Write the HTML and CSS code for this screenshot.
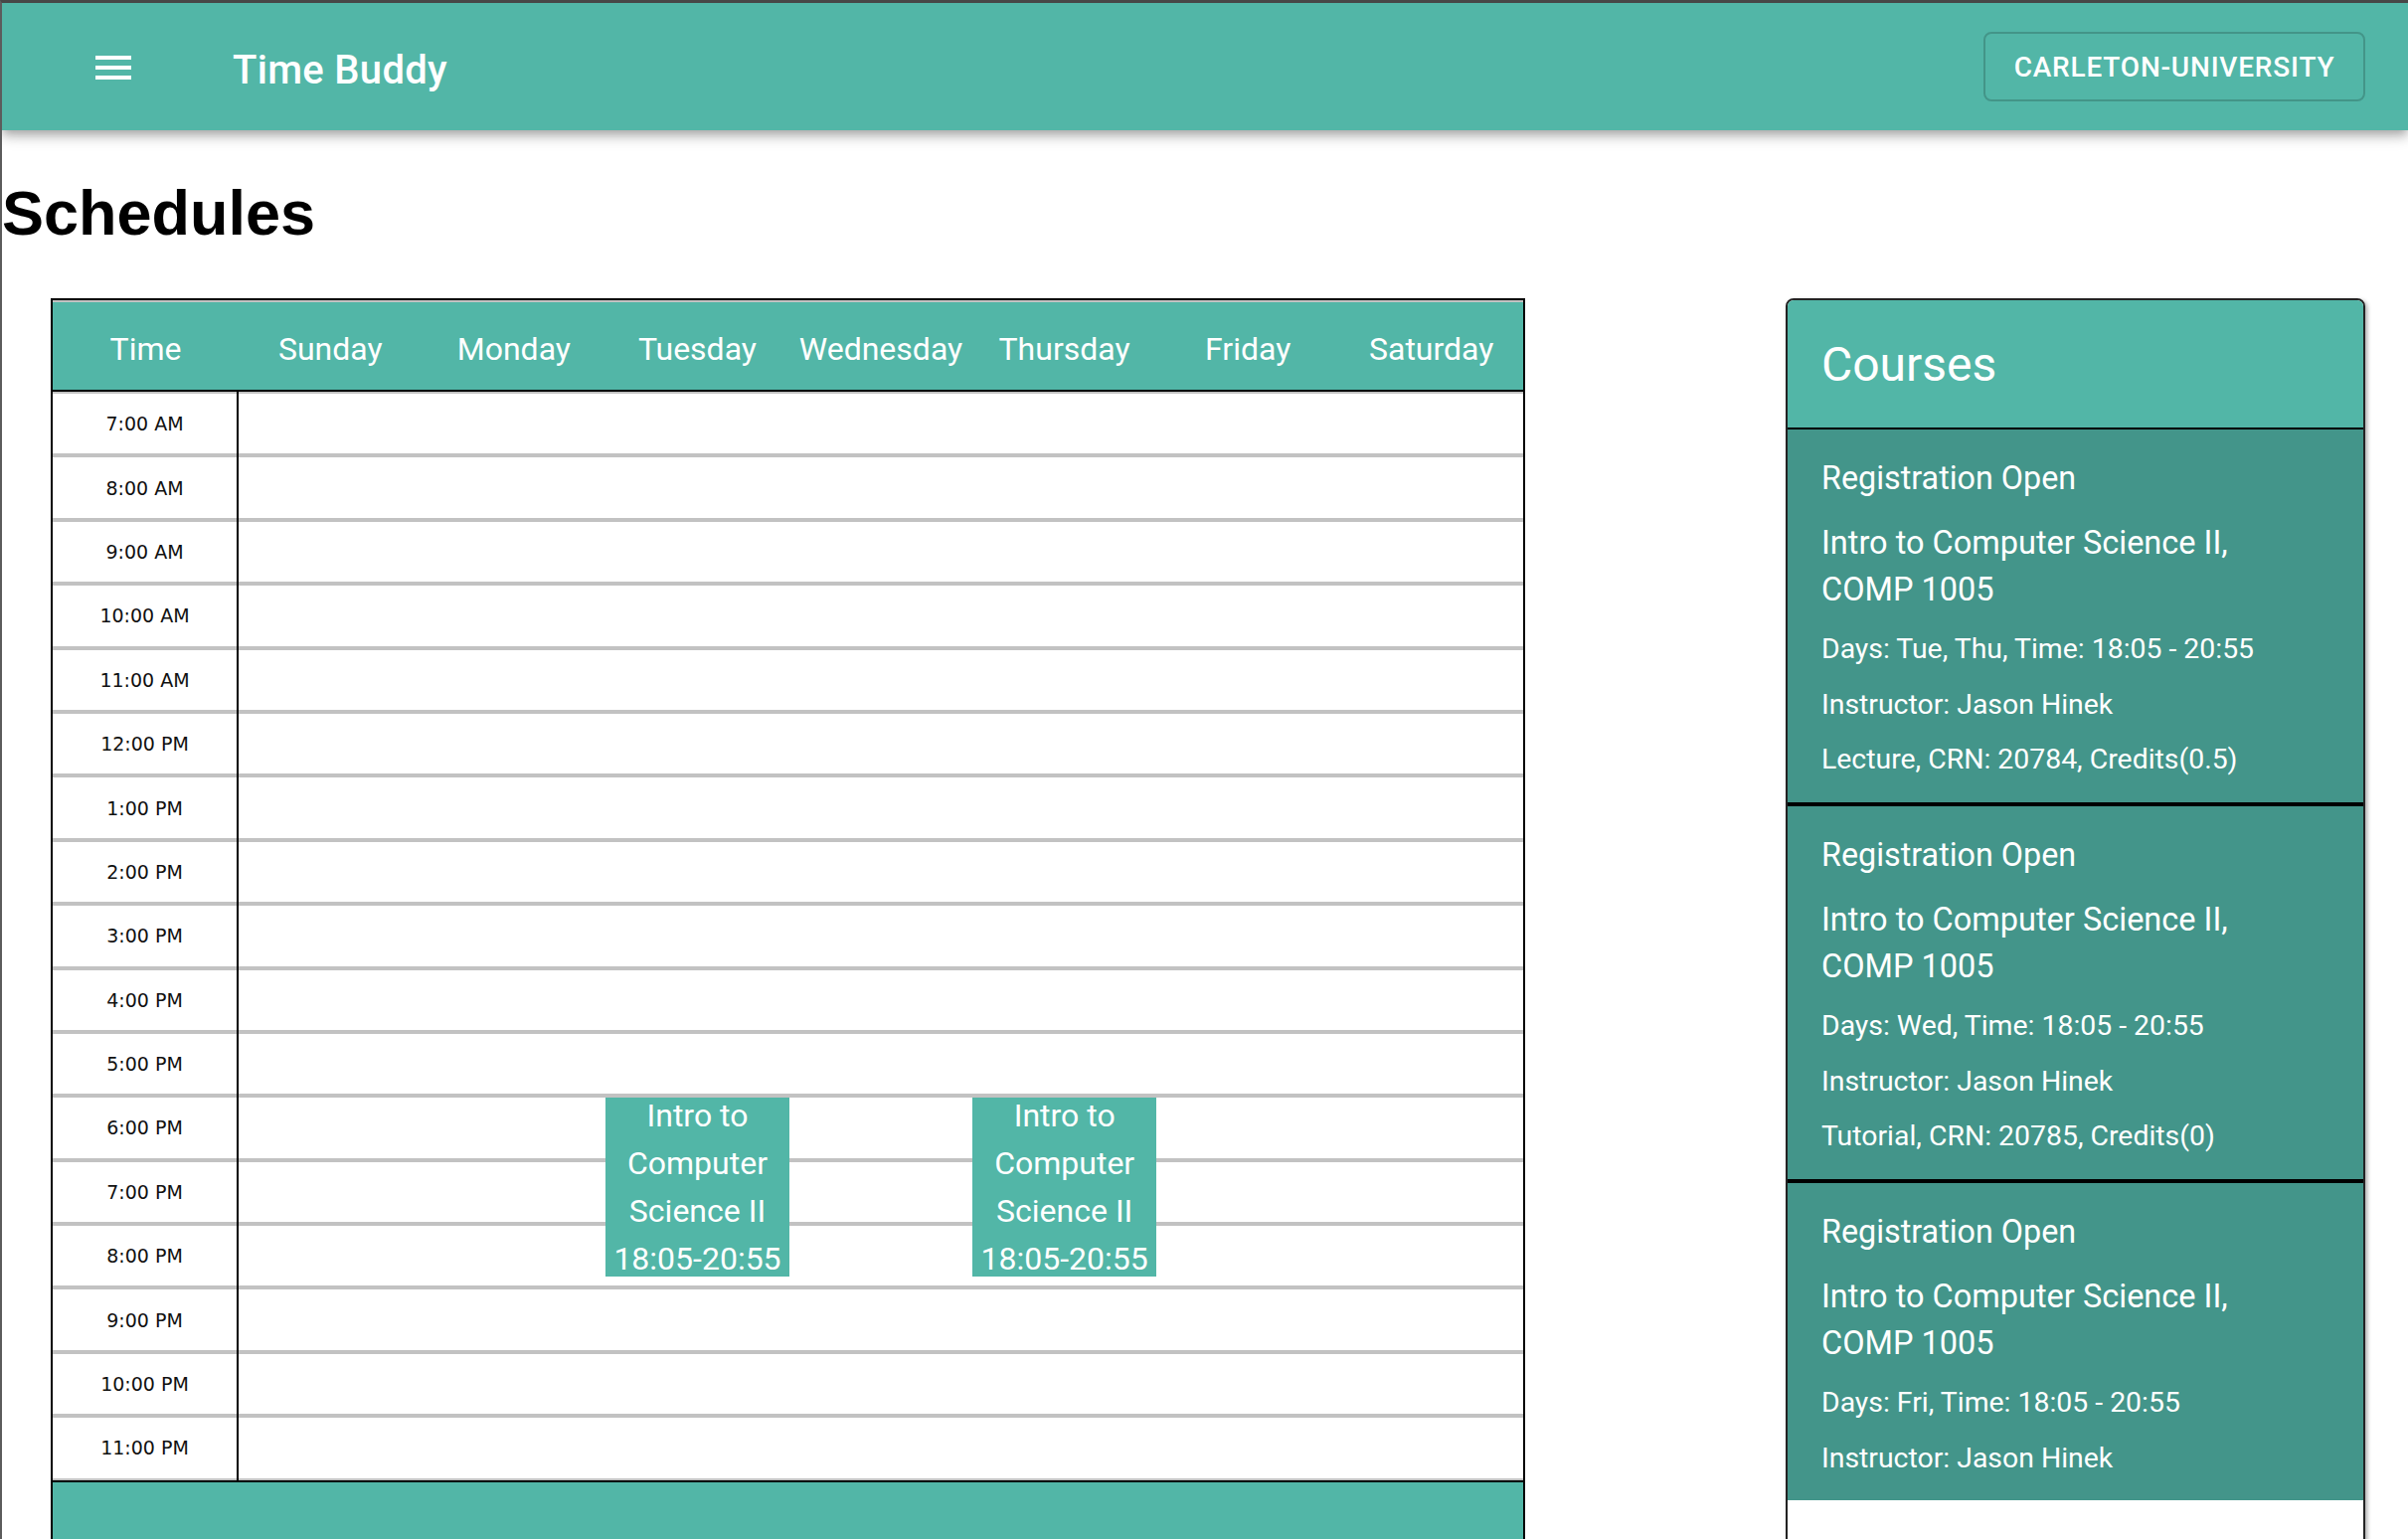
FILE: index.html
```html
<!DOCTYPE html>
<html lang="en">
<head>
<meta charset="utf-8">
<title>Time Buddy</title>
<link rel="stylesheet" href="styles.css">
</head>
<body>
<div class="window">
  <span class="edge-mark edge-mark-top"></span>
  <span class="edge-mark edge-mark-bottom"></span>
  <header class="appbar">
    <button class="menu-btn" aria-label="menu">
      <svg width="36" height="24" viewBox="0 0 36 24"><rect x="0" y="0" width="36" height="4" fill="#fff"/><rect x="0" y="10" width="36" height="4" fill="#fff"/><rect x="0" y="20" width="36" height="4" fill="#fff"/></svg>
    </button>
    <span class="app-title">Time Buddy</span>
    <button class="uni-btn">Carleton-University</button>
  </header>
  <main class="main">
    <h1 class="page-title">Schedules</h1>
    <div class="layout">
      <section class="schedule">
        <div class="sched-head">
          <div class="head-cell">Time</div>
          <div class="head-cell">Sunday</div>
          <div class="head-cell">Monday</div>
          <div class="head-cell">Tuesday</div>
          <div class="head-cell">Wednesday</div>
          <div class="head-cell">Thursday</div>
          <div class="head-cell">Friday</div>
          <div class="head-cell">Saturday</div>
        </div>
        <div class="sched-body">
          <div class="time-col">
            <div class="row">7:00 AM</div>
            <div class="row">8:00 AM</div>
            <div class="row">9:00 AM</div>
            <div class="row">10:00 AM</div>
            <div class="row">11:00 AM</div>
            <div class="row">12:00 PM</div>
            <div class="row">1:00 PM</div>
            <div class="row">2:00 PM</div>
            <div class="row">3:00 PM</div>
            <div class="row">4:00 PM</div>
            <div class="row">5:00 PM</div>
            <div class="row">6:00 PM</div>
            <div class="row">7:00 PM</div>
            <div class="row">8:00 PM</div>
            <div class="row">9:00 PM</div>
            <div class="row">10:00 PM</div>
            <div class="row">11:00 PM</div>
          </div>
          <div class="day-area">
            <div class="row"></div><div class="row"></div><div class="row"></div><div class="row"></div>
            <div class="row"></div><div class="row"></div><div class="row"></div><div class="row"></div>
            <div class="row"></div><div class="row"></div><div class="row"></div><div class="row"></div>
            <div class="row"></div><div class="row"></div><div class="row"></div><div class="row"></div>
            <div class="row"></div>
            <div class="event event-tue"><div class="event-text">Intro to Computer Science II<br>18:05-20:55</div></div>
            <div class="event event-thu"><div class="event-text">Intro to Computer Science II<br>18:05-20:55</div></div>
          </div>
        </div>
        <div class="sched-foot"></div>
      </section>
      <aside class="courses">
        <div class="courses-head">Courses</div>
        <div class="course-list">
          <div class="course">
            <p class="c-status">Registration Open</p>
            <p class="c-name">Intro to Computer Science II, COMP 1005</p>
            <p class="c-meta">Days: Tue, Thu, Time: 18:05 - 20:55</p>
            <p class="c-meta">Instructor: Jason Hinek</p>
            <p class="c-meta">Lecture, CRN: 20784, Credits(0.5)</p>
          </div>
          <div class="course">
            <p class="c-status">Registration Open</p>
            <p class="c-name">Intro to Computer Science II, COMP 1005</p>
            <p class="c-meta">Days: Wed, Time: 18:05 - 20:55</p>
            <p class="c-meta">Instructor: Jason Hinek</p>
            <p class="c-meta">Tutorial, CRN: 20785, Credits(0)</p>
          </div>
          <div class="course">
            <p class="c-status">Registration Open</p>
            <p class="c-name">Intro to Computer Science II, COMP 1005</p>
            <p class="c-meta">Days: Fri, Time: 18:05 - 20:55</p>
            <p class="c-meta">Instructor: Jason Hinek</p>
          </div>
        </div>
        <div class="courses-rest"></div>
      </aside>
    </div>
  </main>
</div>
</body>
</html>
```

FILE: styles.css
```css
html, body {
  margin: 0;
  padding: 0;
  overflow: hidden;
  background: #ffffff;
}

body {
  width: 2422px;
  height: 1548px;
  font-family: Roboto, "Liberation Sans", Arial, sans-serif;
}

.window {
  position: relative;
  height: 1548px;
  box-sizing: border-box;
  border-top: 3px solid #474747;
  border-left: 2px solid #5c5c5c;
  overflow: hidden;
}

.edge-mark {
  position: absolute;
  left: -2px;
  width: 2px;
  background: #12998a;
  z-index: 5;
}

.edge-mark-top {
  top: 245px;
  height: 62px;
}

.edge-mark-bottom {
  top: 1247px;
  height: 63px;
}

/* ---------- App bar ---------- */
.appbar {
  position: relative;
  z-index: 2;
  height: 128px;
  display: flex;
  align-items: center;
  padding: 0 43px 0 88px;
  background: #52b6a7;
  box-shadow: 0 4px 8px -2px rgba(0, 0, 0, 0.2), 0 8px 10px 0 rgba(0, 0, 0, 0.14), 0 2px 20px 0 rgba(0, 0, 0, 0.12);
}

.menu-btn {
  width: 48px;
  height: 48px;
  margin-top: 2px;
  padding: 0;
  border: 0;
  background: none;
  display: flex;
  align-items: center;
  justify-content: center;
}

.menu-btn svg {
  display: block;
}

.app-title {
  margin-left: 96px;
  margin-top: 6px;
  font-size: 40px;
  font-weight: 500;
  letter-spacing: 0.3px;
  color: #ffffff;
}

.uni-btn {
  margin-left: auto;
  width: 384px;
  height: 70px;
  padding: 0;
  box-sizing: border-box;
  border: 2px solid rgba(0, 0, 0, 0.18);
  border-radius: 8px;
  background: transparent;
  color: #ffffff;
  font-family: Roboto, sans-serif;
  font-size: 28px;
  font-weight: 500;
  letter-spacing: 0.8px;
  text-transform: uppercase;
  white-space: nowrap;
  text-align: center;
}

/* ---------- Main ---------- */
.main {
  display: block;
}

.page-title {
  margin: 46px 0 49px 0;
  font-family: "Liberation Sans", Arial, sans-serif;
  font-size: 63px;
  line-height: 74px;
  font-weight: 700;
  color: #000000;
}

.layout {
  display: flex;
  justify-content: space-between;
  align-items: flex-start;
  padding: 0 43px 0 49px;
}

/* ---------- Schedule table ---------- */
.schedule {
  width: 1483px;
  box-sizing: border-box;
  border: 2px solid #000000;
  border-bottom: 0;
}

.sched-head {
  display: grid;
  grid-template-columns: 187px repeat(7, 1fr);
  height: 88px;
  background: #52b6a7;
  border-top: 2px solid #c2c2c2;
  border-bottom: 2px solid #000000;
}

.head-cell {
  display: flex;
  align-items: center;
  justify-content: center;
  padding-top: 6px;
  box-sizing: border-box;
  color: #ffffff;
  font-size: 32px;
  white-space: nowrap;
}

.sched-body {
  display: flex;
}

.time-col {
  width: 187px;
  box-sizing: border-box;
  border-right: 2px solid #000000;
}

.day-area {
  position: relative;
  flex: 1;
}

.row {
  height: 64.4px;
  box-sizing: border-box;
  border-top: 2px solid #c2c2c2;
  border-bottom: 2px solid #c2c2c2;
}

.time-col .row {
  display: flex;
  align-items: center;
  justify-content: center;
  font-family: "DejaVu Sans", Verdana, sans-serif;
  font-size: 19px;
  color: #111111;
}

.event {
  position: absolute;
  top: 710px;
  width: 184.6px;
  height: 180px;
  background: #52b6a7;
  color: #ffffff;
  font-size: 32px;
  line-height: 48px;
  text-align: center;
}

.event-text {
  margin-top: -6px;
}

.event-tue {
  left: 369.2px;
}

.event-thu {
  left: 738.4px;
}

.sched-foot {
  height: 100px;
  background: #52b6a7;
  border-top: 2px solid #000000;
}

/* ---------- Courses panel ---------- */
.courses {
  width: 583px;
  box-sizing: border-box;
  border: 2px solid #232323;
  border-radius: 8px;
  overflow: hidden;
  box-shadow: 2px 2px 4px rgba(0, 0, 0, 0.35);
}

.courses-head {
  height: 128px;
  display: flex;
  align-items: center;
  padding-left: 34px;
  background: #52b6a7;
  color: #ffffff;
  font-size: 48px;
}

.course-list {
  height: 1079px;
  overflow: hidden;
}

.course {
  padding: 24.5px 70px 23px 34px;
  background: #43958a;
  border-top: 2px solid #000000;
  border-bottom: 2px solid #000000;
  color: #ffffff;
}

.course p {
  margin: 0 0 15.5px 0;
}

.course p:last-child {
  margin-bottom: 0;
}

.course .c-status {
  font-size: 32.3px;
  line-height: 48px;
  margin-bottom: 18.5px;
}

.course .c-name {
  font-size: 32.5px;
  line-height: 47px;
  margin-bottom: 16px;
}

.course .c-meta {
  font-size: 28.4px;
  line-height: 40px;
}

.courses-rest {
  height: 200px;
  background: #ffffff;
}
```
